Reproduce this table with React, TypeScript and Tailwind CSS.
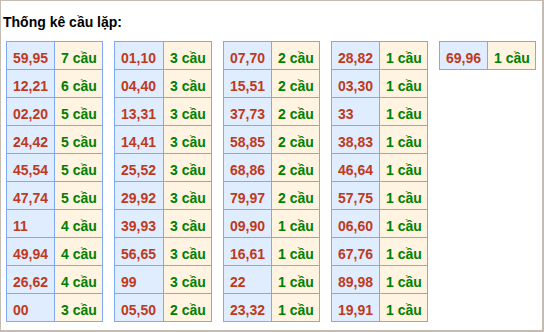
import React from "react";

type Row = [string, number];

const tables: { rows: Row[]; w1: number; w2: number }[] = [
  {
    w1: 48,
    w2: 48,
    rows: [
      ["59,95", 7], ["12,21", 6], ["02,20", 5], ["24,42", 5], ["45,54", 5],
      ["47,74", 5], ["11", 4], ["49,94", 4], ["26,62", 4], ["00", 3],
    ],
  },
  {
    w1: 49,
    w2: 48,
    rows: [
      ["01,10", 3], ["04,40", 3], ["13,31", 3], ["14,41", 3], ["25,52", 3],
      ["29,92", 3], ["39,93", 3], ["56,65", 3], ["99", 3], ["05,50", 2],
    ],
  },
  {
    w1: 48,
    w2: 48,
    rows: [
      ["07,70", 2], ["15,51", 2], ["37,73", 2], ["58,85", 2], ["68,86", 2],
      ["79,97", 2], ["09,90", 1], ["16,61", 1], ["22", 1], ["23,32", 1],
    ],
  },
  {
    w1: 48,
    w2: 48,
    rows: [
      ["28,82", 1], ["03,30", 1], ["33", 1], ["38,83", 1], ["46,64", 1],
      ["57,75", 1], ["06,60", 1], ["67,76", 1], ["89,98", 1], ["19,91", 1],
    ],
  },
  { w1: 48, w2: 48, rows: [["69,96", 1]] },
];

export default function App() {
  return (
    <div
      className="w-[544px] h-[332px] bg-white border-l border-t border-r-2 border-b-2 border-[#c4bcb0] overflow-hidden"
      style={{ fontFamily: '"Liberation Sans", Arial, sans-serif' }}
    >
      <div className="pl-[2px] pt-[11px] text-[14px] leading-[20px] font-bold text-black mb-[9px]">
        Thống kê cầu lặp:
      </div>
      <div className="flex items-start gap-[11px] pl-[5px]">
        {tables.map((t, ti) => (
          <div key={ti} className="flex flex-col border-l border-t border-[#80a9f5]">
            {t.rows.map(([n, c], ri) => (
              <div key={ri} className="flex h-[28px]">
                <div
                  className="h-full flex items-center pt-[4px] pl-[6px] bg-[#e0edff] border-r border-b border-[#80a9f5] text-[14px] font-bold text-[#bf3a1c] leading-none"
                  style={{ width: t.w1 }}
                >
                  {n}
                </div>
                <div
                  className="h-full flex items-center pt-[4px] pl-[6px] bg-[#fff4e1] border-r border-b border-[#80a9f5] text-[14px] font-bold text-[#008000] leading-none whitespace-nowrap"
                  style={{ width: t.w2 }}
                >
                  {c} cầu
                </div>
              </div>
            ))}
          </div>
        ))}
      </div>
    </div>
  );
}
